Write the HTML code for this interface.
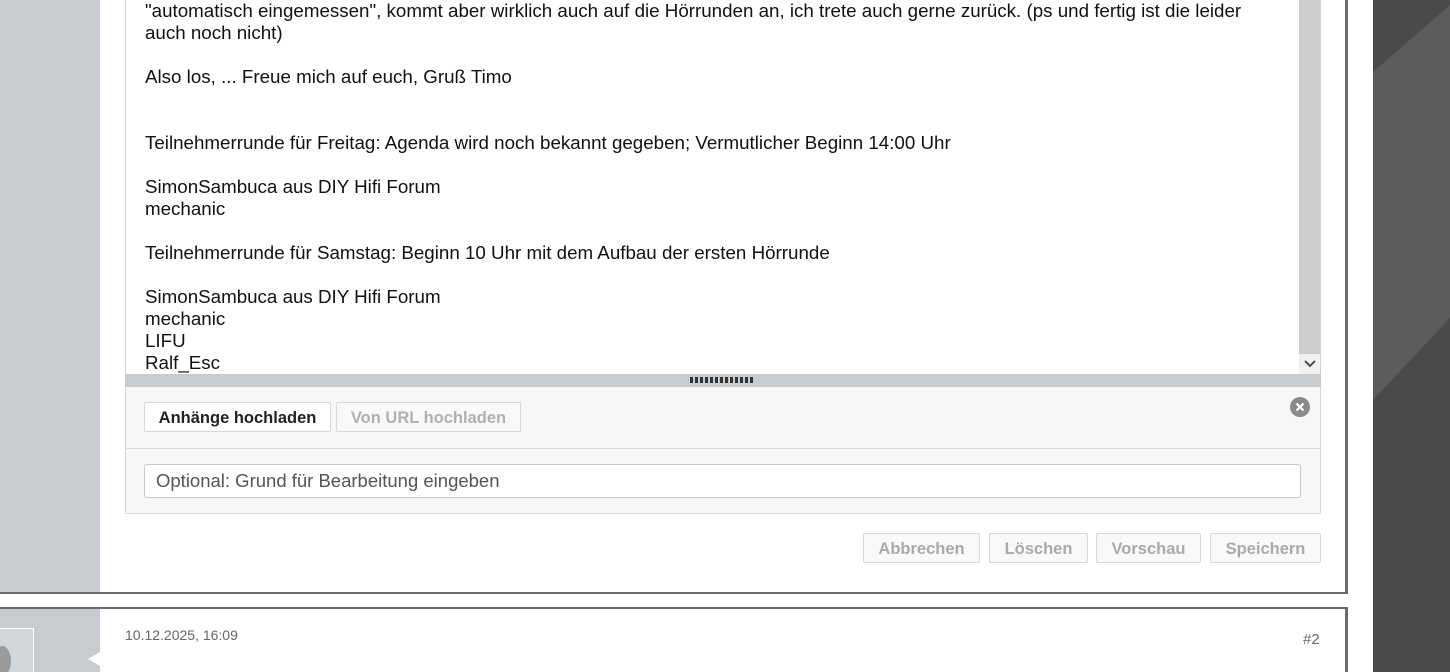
<!DOCTYPE html>
<html><head><meta charset="utf-8"><style>
*{margin:0;padding:0;box-sizing:border-box}
html,body{width:1450px;height:672px;overflow:hidden}
body{background:#fff;font-family:"Liberation Sans",Arial,sans-serif;position:relative}
.dark{position:absolute;left:1373px;top:0;width:77px;height:672px;background:#5c5c5c;overflow:hidden}
.abs{position:absolute}
.txt{position:absolute;left:145px;top:0px;font-size:18.75px;line-height:22px;color:#111;white-space:pre}
.btn{position:absolute;height:30px;border:1px solid #d8d8d8;border-radius:2px;background:#f9f9f9;font-size:16.5px;font-weight:bold;color:#aaa;text-align:center;line-height:31px}
</style></head><body>
<div class="dark">
<svg width="77" height="672" style="position:absolute;left:0;top:0">
<polygon points="0,0 77,0 77,5 0,72" fill="#4a4a4a"/>
<polygon points="0,400 77,318 77,672 0,672" fill="#4a4a4a"/>
</svg></div>
<div class="abs" style="left:0;top:0;width:100px;height:593px;background:#c8cbcf"></div>
<div class="abs" style="left:1345px;top:0;width:3px;height:594px;background:#6a6a6a"></div>
<div class="abs" style="left:0;top:592px;width:1348px;height:2px;background:#6a6a6a;border-radius:0 0 3px 0"></div>
<div class="abs" style="left:125px;top:0;width:1196px;height:374px;border-left:1px solid #d0d0d0;border-right:1px solid #d0d0d0;background:#fff"></div>
<div class="abs" style="left:1299px;top:0;width:21px;height:354px;background:#cdcdcd"></div>
<div class="abs" style="left:1299px;top:354px;width:21px;height:20px;background:#f1f1f1;color:#555;font-size:12px;text-align:center;line-height:20px">
<svg width="12" height="8" style="margin-top:6px"><path d="M1 1 L6 6 L11 1" stroke="#505050" stroke-width="2" fill="none"/></svg></div>
<div class="txt">"automatisch eingemessen", kommt aber wirklich auch auf die Hörrunden an, ich trete auch gerne zurück. (ps und fertig ist die leider
auch noch nicht)

Also los, ... Freue mich auf euch, Gruß Timo


Teilnehmerrunde für Freitag: Agenda wird noch bekannt gegeben; Vermutlicher Beginn 14:00 Uhr

SimonSambuca aus DIY Hifi Forum
mechanic

Teilnehmerrunde für Samstag: Beginn 10 Uhr mit dem Aufbau der ersten Hörrunde

SimonSambuca aus DIY Hifi Forum
mechanic
LIFU
Ralf_Esc</div>
<div class="abs" style="left:125px;top:374px;width:1196px;height:13px;background:#c9cccf"></div>
<div class="abs" style="left:690px;top:377px;width:64px;height:6px;background:repeating-linear-gradient(90deg,#333 0 3px,transparent 3px 5px)"></div>
<div class="abs" style="left:125px;top:387px;width:1196px;height:127px;background:#f7f7f7;border:1px solid #d8d8d8;border-top:none"></div>
<div class="abs" style="left:126px;top:448px;width:1194px;height:1px;background:#dcdcdc"></div>
<div class="btn" style="left:144px;top:402px;width:187px;color:#222;background:#fff">Anhänge hochladen</div>
<div class="btn" style="left:336px;top:402px;width:185px;color:#b0b0b0">Von URL hochladen</div>
<div class="abs" style="left:1290px;top:397px;width:20px;height:20px;border-radius:50%;background:#8a8a8a">
<svg width="20" height="20"><path d="M6.5 6.5 L13.5 13.5 M13.5 6.5 L6.5 13.5" stroke="#fff" stroke-width="2.2"/></svg></div>
<div class="abs" style="left:144px;top:464px;width:1157px;height:34px;background:#fff;border:1px solid #c8c8c8;border-radius:3px;font-size:18.5px;line-height:32px;padding-left:11px;color:#555">Optional: Grund für Bearbeitung eingeben</div>
<div class="btn" style="left:863px;top:533px;width:117px">Abbrechen</div>
<div class="btn" style="left:989px;top:533px;width:99px">Löschen</div>
<div class="btn" style="left:1096px;top:533px;width:105px">Vorschau</div>
<div class="btn" style="left:1210px;top:533px;width:111px">Speichern</div>
<div class="abs" style="left:0;top:607px;width:1348px;height:2px;background:#6a6a6a;border-radius:0 3px 0 0"></div>
<div class="abs" style="left:1345px;top:607px;width:3px;height:65px;background:#6a6a6a"></div>
<div class="abs" style="left:0;top:609px;width:100px;height:63px;background:#c8cbcf"></div>
<div class="abs" style="left:-2px;top:628px;width:36px;height:44px;background:#d4d7da;border:1px solid #fff;border-bottom:none;overflow:hidden"><div style="position:absolute;left:-6px;top:17px;width:18px;height:30px;border-radius:50%;background:#9a9a9a"></div></div>
<div class="abs" style="left:88px;top:652px;width:0;height:0;border-top:7px solid transparent;border-bottom:7px solid transparent;border-right:12px solid #fff"></div>
<div class="abs" style="left:125px;top:627px;font-size:14px;color:#666">10.12.2025, 16:09</div>
<div class="abs" style="left:1303px;top:631px;font-size:15px;color:#666">#2</div>
</body></html>
